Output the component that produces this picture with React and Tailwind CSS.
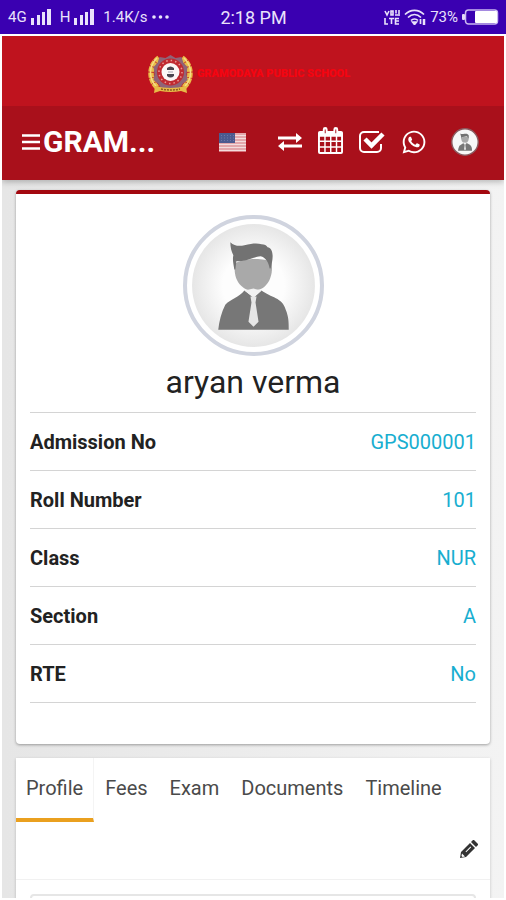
import { FaWhatsapp } from "react-icons/fa";

const details = [
  { label: "Admission No", value: "GPS000001" },
  { label: "Roll Number", value: "101" },
  { label: "Class", value: "NUR" },
  { label: "Section", value: "A" },
  { label: "RTE", value: "No" },
];

const tabs = ["Profile", "Fees", "Exam", "Documents", "Timeline"];

const SignalBars = () => (
  <svg width="21" height="17" viewBox="0 0 21 17" fill="currentColor" aria-hidden="true">
    <rect x="0" y="9" width="3" height="7" />
    <rect x="6" y="6" width="3" height="10" />
    <rect x="11" y="3" width="3" height="13" />
    <rect x="16" y="0" width="4" height="16" />
  </svg>
);

const VolteIcon = () => (
  <svg width="16" height="15" viewBox="0 0 16 15" fill="none" stroke="currentColor" strokeWidth="1.6" aria-hidden="true">
    <path d="M1 1l2 4 2-4M7 1v4h2V1zM12 0v3.5M15 0v6M11 5h3" />
    <path d="M1 8v6h3M5 8.5h5M7.5 8.5V14M15 8.5h-3.5V14H15M11.5 11H15" />
  </svg>
);

const WifiIcon = () => (
  <svg width="22" height="16" viewBox="0 0 22 16" fill="none" stroke="currentColor" strokeWidth="1.7" aria-hidden="true">
    <path d="M1 5.5C6.500 0 14.500 0 20 5.5M4 8.500c4-4 9-4 13 0M7 11.500c2-2 5-2 7 0" />
    <path d="M8.500 13l2 2.500 2-2.500z" fill="currentColor" />
    <path d="M16.500 10v5" />
    <path d="M20 10v6" strokeWidth="2.500" />
  </svg>
);

const BatteryIcon = () => (
  <svg width="37" height="16" viewBox="0 0 37 16" aria-hidden="true">
    <rect x="3.5" y="1" width="32" height="14" rx="3" fill="none" stroke="#c9b8f0" strokeWidth="1.5" />
    <rect x="0" y="5" width="3" height="6" rx="1" fill="#e4dcf8" />
    <rect x="13" y="2" width="22" height="12" rx="1" fill="#fff" />
  </svg>
);

const StatusBar = () => (
  <div className="flex h-[34px] shrink-0 items-center bg-[#3a00b1] pr-[7px] pl-2 text-[15px] text-[#e9e2fb]">
    <div className="flex flex-1 items-center gap-1">
      <span>4G</span>
      <SignalBars />
      <span className="pl-1">H</span>
      <SignalBars />
      <span className="pl-1">1.4K/s</span>
      <svg width="18" height="4" viewBox="0 0 18 4" fill="currentColor" aria-hidden="true">
        <circle cx="2" cy="2" r="1.8" />
        <circle cx="8.5" cy="2" r="1.8" />
        <circle cx="15" cy="2" r="1.8" />
      </svg>
    </div>
    <span className="text-[18px]">2:18 PM</span>
    <div className="flex flex-1 items-center justify-end gap-1">
      <VolteIcon />
      <WifiIcon />
      <span>73%</span>
      <BatteryIcon />
    </div>
  </div>
);

const SchoolCrest = () => (
  <svg width="45" height="41" viewBox="0 0 45 41" aria-hidden="true">
    <g fill="none" stroke="#e9bd48" strokeWidth="5.500">
      <path d="M11 4C0 12 1 27 10 34" strokeDasharray="5 0.700" />
      <path d="M34 4c11 8 10 23 1 30" strokeDasharray="5 0.700" />
    </g>
    <g fill="none" stroke="#f6dc86" strokeWidth="1.500">
      <path d="M9 4C0 13 1 25 8 32M36 4c9 9 8 21 1 28" />
    </g>
    <path d="M22.500 1l5 3 6-1 2 6 4 4-1 7 1 6-5 4-3 5-9 1-9-1-3-5-5-4 1-6-1-7 4-4 2-6 6 1z" fill="#8f6478" />
    <circle cx="22.500" cy="18" r="13.500" fill="#c02a31" />
    <circle cx="22.500" cy="18" r="11.500" fill="none" stroke="#e99a94" strokeWidth="1.500" strokeDasharray="1.500 3" />
    <circle cx="22.500" cy="18" r="9" fill="#fbf7f6" />
    <path d="M19 14q3.500-3 7 0v2h-7zM19 20h7v2q-3.500 3-7 0z" fill="#4b4650" />
    <path d="M20 17h5v2h-5z" fill="#d0ced3" />
    <path d="M7 32q15.500 4 31 0l1 7-6-2q-10.500 2-21 0l-6 2z" fill="#e7bb47" />
    <path d="M13 35q9.500 2 19 0" fill="none" stroke="#8d5a23" strokeWidth="1.500" strokeDasharray="2 1" />
  </svg>
);

const UsFlag = () => (
  <svg width="27" height="19" viewBox="0 0 27 19" aria-hidden="true">
    <rect width="27" height="19" fill="#f3dddd" />
    <path d="M0 1h27M0 4h27M0 7h27M0 10h27M0 13h27M0 16h27M0 18.500h27" stroke="#d4727a" strokeWidth="1.200" />
    <rect width="16" height="10" fill="#4c5a8f" />
    <path d="M2 2.500h13M2 5h13M2 7.500h13" stroke="#6c78a6" strokeDasharray="1 2" />
  </svg>
);

const ExchangeIcon = () => (
  <svg width="24" height="18" viewBox="0 0 24 18" fill="currentColor" aria-hidden="true">
    <path d="M0 3.500h18V0l6 5-6 5V6.500H0zM24 11.500H6V8L0 13l6 5v-3.500h18z" />
  </svg>
);

const CalendarIcon = () => (
  <svg width="25" height="27" viewBox="0 0 26 28" aria-hidden="true">
    <path
      fill="currentColor"
      fillRule="evenodd"
      d="M2 4h3V2.500a2.500 2.500 0 0 1 5 0V4h6V2.500a2.500 2.500 0 0 1 5 0V4h3a2 2 0 0 1 2 2v20a2 2 0 0 1-2 2H2a2 2 0 0 1-2-2V6a2 2 0 0 1 2-2zM2 10v4h4.500v-4zM8 10v4h4.500v-4zM14 10v4h4.500v-4zM20 10v4h4v-4zM2 15.500V20h4.500v-4.500zM8 15.500V20h4.500v-4.500zM14 15.500V20h4.500v-4.500zM20 15.500V20h4v-4.500zM2 21.500V26h4.500v-4.500zM8 21.500V26h4.500v-4.500zM14 21.500V26h4.500v-4.500zM20 21.500V26h4v-4.500zM7 2.500v4h1v-4zM18 2.500v4h1v-4z"
    />
  </svg>
);

const TaskIcon = () => (
  <svg width="26" height="23" viewBox="0 0 26 23" fill="none" stroke="currentColor" aria-hidden="true">
    <path d="M20 2H5a4 4 0 0 0-4 4v12a4 4 0 0 0 4 4h13a4 4 0 0 0 4-4v-4" strokeWidth="2" />
    <path d="M6 9l6.500 6.500L24 4" strokeWidth="4.500" />
  </svg>
);

/* Bust with a tie, shared by the header avatar and the profile photo. */
const Person = () => (
  <>
    <path
      d="M52 48c-3 13 4 27 18 27s20-14 18-28c-8-5-28-4-36 1z"
      fill="#a9a9a9"
    />
    <path
      d="M47 27c4 4 9 4 14 3 8-2 13-2 17-1 3 0 5 1 6 3 3 0 5 4 5 9 0 4-1 8-2 12h-1c-1-6-4-11-9-12-8 1-14 5-24 5l-1 8h-1c-1-6-2-10-1-14-2-4-3-8-3-13z"
      fill="#727272"
    />
    <path
      d="M61 75l9 7 8-7c9 7 21 7 24 19 3 7 3 13 3 20H35c1-9 3-17 7-25 5-5 13-7 19-14z"
      fill="#777"
    />
    <path d="M61 75l9 7 8-7-8-2z" fill="#f1f1f1" />
    <path d="M67 81h6l-1 6 3 19-5 5-5-5 3-19z" fill="#e6e6e6" />
  </>
);

const Header = () => (
  <header className="relative shadow-[0_2px_6px_rgba(0,0,0,0.25)]">
    <div className="flex h-[70px] items-center justify-center bg-[#bf131e] pt-[6px] pr-2">
      <SchoolCrest />
      <span className="pl-1 text-[11px] font-black whitespace-nowrap text-[#f50410]">
        GRAMODAYA PUBLIC SCHOOL
      </span>
    </div>
    <nav className="flex h-[74px] items-center justify-between bg-[#a9101b] pr-[25px] pb-[2px] pl-5 text-white">
      <button type="button" className="flex items-center gap-[3px]">
        <svg width="18" height="16" viewBox="0 0 18 16" aria-hidden="true">
          <path d="M0 1.500h18M0 8h18M0 14.500h18" stroke="currentColor" strokeWidth="2.500" />
        </svg>
        <span className="text-[30px] leading-9 font-bold">GRAM...</span>
      </button>
      <div className="flex items-center">
        <button type="button" aria-label="Language" className="mr-8">
          <UsFlag />
        </button>
        <div className="flex items-center gap-4">
          <button type="button" aria-label="Switch session">
            <ExchangeIcon />
          </button>
          <button type="button" aria-label="Calendar" className="pb-1">
            <CalendarIcon />
          </button>
          <button type="button" aria-label="Tasks" className="pb-[2px]">
            <TaskIcon />
          </button>
          <button type="button" aria-label="WhatsApp">
            <FaWhatsapp size={26} />
          </button>
        </div>
        <button type="button" aria-label="Account" className="ml-6">
          <svg width="28" height="28" viewBox="0 0 140 140" aria-hidden="true">
            <circle cx="70" cy="70" r="66" fill="#f7f7f7" stroke="#8b5b60" strokeWidth="7" />
            <Person />
          </svg>
        </button>
      </div>
    </nav>
  </header>
);

const ProfileCard = () => (
  <section className="rounded-sm border-t-4 border-[#a3080f] bg-white px-[14px] pt-[21px] pb-[41px] shadow-[0_1px_3px_rgba(0,0,0,0.35)]">
    <svg className="mx-auto" width="141" height="141" viewBox="0 0 140 140" role="img" aria-label="Profile photo">
      <defs>
        <radialGradient id="photo-bg">
          <stop offset="0.5" stopColor="#fdfdfd" />
          <stop offset="1" stopColor="#e6e6e6" />
        </radialGradient>
      </defs>
      <circle cx="70" cy="70" r="68" fill="#fff" stroke="#d0d4df" strokeWidth="4" />
      <circle cx="70" cy="70" r="61" fill="url(#photo-bg)" />
      <Person />
    </svg>
    <h1 className="mt-[6px] text-center text-[32px] leading-10 text-[#222]">aryan verma</h1>
    <dl className="mt-[10px] border-t border-[#d4d4d4] text-[20px]">
      {details.map((item) => (
        <div
          key={item.label}
          className="flex h-[58px] items-center justify-between border-b border-[#d4d4d4]"
        >
          <dt className="font-bold text-[#222]">{item.label}</dt>
          <dd className="text-[#18aed0]">{item.value}</dd>
        </div>
      ))}
    </dl>
  </section>
);

const TabsCard = () => (
  <section className="flex-1 bg-white shadow-[0_1px_3px_rgba(0,0,0,0.2)]">
    <div role="tablist" className="flex text-[20px] text-[#4a4a4a]">
      {tabs.map((tab, index) => (
        <button
          key={tab}
          type="button"
          role="tab"
          aria-selected={index === 0}
          className={
            index === 0
              ? "h-16 border-r border-b-4 border-r-[#f4f4f4] border-b-[#eaa01f] px-[10px]"
              : "h-16 border-b-4 border-transparent px-[11px]"
          }
        >
          {tab}
        </button>
      ))}
    </div>
    <div className="flex h-[58px] items-center justify-end border-b border-[#f1f1f1] pr-3 pb-1">
      <button type="button" aria-label="Edit profile" className="text-[#333]">
        <svg width="18" height="18" viewBox="0 0 18 18" aria-hidden="true">
          <path
            fill="currentColor"
            fillRule="evenodd"
            d="M0 18l1-6L10 3l5 5-9 9zM2 13.500L1.500 16l1 1L5 16.500zM5.500 11.500l.7.7 5-5-.7-.7zM11 2l2-2h1l4 4v1l-2 2z"
          />
        </svg>
      </button>
    </div>
    <div className="mx-[14px] mt-[14px] h-10 rounded-sm border-2 border-[#e6e6e6]" />
  </section>
);

export default function App() {
  return (
    <div className="flex h-screen flex-col bg-white pb-[2px] font-['Roboto',sans-serif]">
      <StatusBar />
      <div className="mx-[2px] mt-[2px] flex flex-1 flex-col overflow-hidden bg-linear-to-r from-[#e6e6e6] to-[#f3f3f3]">
        <Header />
        <main className="flex flex-1 flex-col gap-[14px] px-[14px] pt-[10px]">
          <ProfileCard />
          <TabsCard />
        </main>
      </div>
    </div>
  );
}
